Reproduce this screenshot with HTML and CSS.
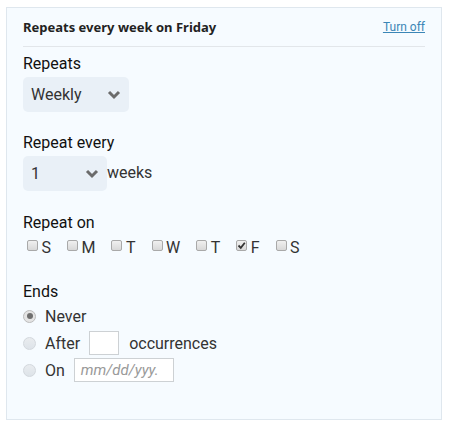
FILE: index.html
```html
<!DOCTYPE html>
<html lang="en">
<head>
  <meta charset="UTF-8">
  <title>Repeat settings</title>
  <link rel="stylesheet" href="styles.css">
</head>
<body>
  <div class="repeat-panel">
    <div class="panel-header">
      <span class="summary">Repeats every week on Friday</span>
      <a href="#" class="turn-off">Turn off</a>
    </div>

    <div class="field">
      <div class="field-label">Repeats</div>
      <div class="select select-freq">
        <span>Weekly</span>
        <svg width="14" height="10" viewBox="0 0 14 10"><path d="M2 2 L7 7 L12 2" fill="none" stroke="#6b6b6b" stroke-width="3"/></svg>
      </div>
    </div>

    <div class="field">
      <div class="field-label">Repeat every</div>
      <div class="row">
        <div class="select select-interval">
          <span>1</span>
          <svg width="14" height="10" viewBox="0 0 14 10"><path d="M2 2 L7 7 L12 2" fill="none" stroke="#6b6b6b" stroke-width="3"/></svg>
        </div>
        <span class="unit">weeks</span>
      </div>
    </div>

    <div class="field field-days">
      <div class="field-label">Repeat on</div>
      <div class="days">
        <label class="day"><span class="check"></span>S</label>
        <label class="day"><span class="check"></span>M</label>
        <label class="day"><span class="check"></span>T</label>
        <label class="day"><span class="check"></span>W</label>
        <label class="day"><span class="check"></span>T</label>
        <label class="day"><span class="check"><svg width="9" height="9" viewBox="0 0 9 9"><path d="M1.5 4.5 L3.8 6.8 L7.8 1.8" fill="none" stroke="#333" stroke-width="1.8"/></svg></span>F</label>
        <label class="day"><span class="check"></span>S</label>
      </div>
    </div>

    <div class="field field-ends">
      <div class="field-label">Ends</div>
      <div class="ends">
        <label class="end-row"><span class="radio checked"></span>Never</label>
        <label class="end-row"><span class="radio"></span>After <span class="box-input count"></span> occurrences</label>
        <label class="end-row"><span class="radio"></span>On <span class="box-input date">mm/dd/yyy.</span></label>
      </div>
    </div>
  </div>
</body>
</html>
```

FILE: styles.css
```css
* {
  box-sizing: border-box;
  margin: 0;
  padding: 0;
}
body {
  font-family: Roboto, 'Liberation Sans', sans-serif;
  background-color: #ffffff;
  color: #222;
  padding: 7px 9px 9px 6px;
}
.repeat-panel {
  width: 436px;
  height: 413px;
  border: 1px solid #dfe7ee;
  background-color: #f6fbff;
  padding: 0 16px;
}
.panel-header {
  display: flex;
  justify-content: space-between;
  align-items: center;
  height: 39px;
  border-bottom: 1px solid #e2e6ea;
}
.summary {
  font-family: 'Noto Sans', sans-serif;
  font-size: 13px;
  font-weight: 700;
  color: #222;
}
.turn-off {
  font-size: 12px;
  color: #3b86b6;
  text-decoration: underline;
}
.field {
  margin-top: 6px;
}
.field + .field {
  margin-top: 20px;
}
.field-label {
  font-size: 16px;
  font-weight: 400;
  line-height: 22px;
  color: #111;
}
.select {
  display: flex;
  justify-content: space-between;
  align-items: center;
  height: 35px;
  margin-top: 2px;
  padding: 0 8px 0 8px;
  border-radius: 5px;
  background-color: #e9f0f7;
  font-size: 16px;
  color: #333;
}
.select-freq {
  width: 106px;
}
.select-interval {
  width: 84px;
}
.row {
  display: flex;
  align-items: center;
}
.unit {
  font-size: 16px;
  color: #333;
}
.field + .field-days {
  margin-top: 21px;
}
.days {
  display: flex;
  gap: 16px;
  margin-top: 3px;
  padding-left: 4px;
}
.day {
  display: flex;
  align-items: center;
  height: 20px;
  font-size: 16px;
  color: #333;
}
.check {
  width: 11px;
  height: 11px;
  margin-right: 3.5px;
  margin-top: -3px;
  border: 1px solid #a9a9a9;
  border-radius: 2px;
  background: linear-gradient(#f0f0f0, #d8d8d8);
  display: flex;
  align-items: center;
  justify-content: center;
}
.field + .field-ends {
  margin-top: 24px;
}
.ends {
  margin-top: 1px;
  display: flex;
  flex-direction: column;
  gap: 3px;
}
.end-row {
  display: flex;
  align-items: center;
  height: 24px;
  font-size: 16px;
  color: #333;
}
.radio {
  width: 13px;
  height: 13px;
  margin-right: 9px;
  border-radius: 50%;
  border: 1px solid #d3d8dd;
  background: linear-gradient(#e9ecef, #dde3e9);
  position: relative;
}
.radio.checked {
  border-color: #bcbcbc;
  background: #e4e4e4;
}
.radio.checked::after {
  content: "";
  position: absolute;
  left: 2.5px;
  top: 2.5px;
  width: 6px;
  height: 6px;
  border-radius: 50%;
  background-color: #6f6f6f;
}
.box-input {
  display: inline-block;
  background-color: #ffffff;
  border: 1px solid #cdd1d4;
}
.count {
  width: 30px;
  height: 24px;
  margin: 0 10px 0 9px;
}
.date {
  width: 100px;
  height: 24px;
  margin-left: 9px;
  padding-left: 6px;
  font-size: 15px;
  font-style: italic;
  line-height: 22px;
  color: #999;
  overflow: hidden;
  white-space: nowrap;
}
```
